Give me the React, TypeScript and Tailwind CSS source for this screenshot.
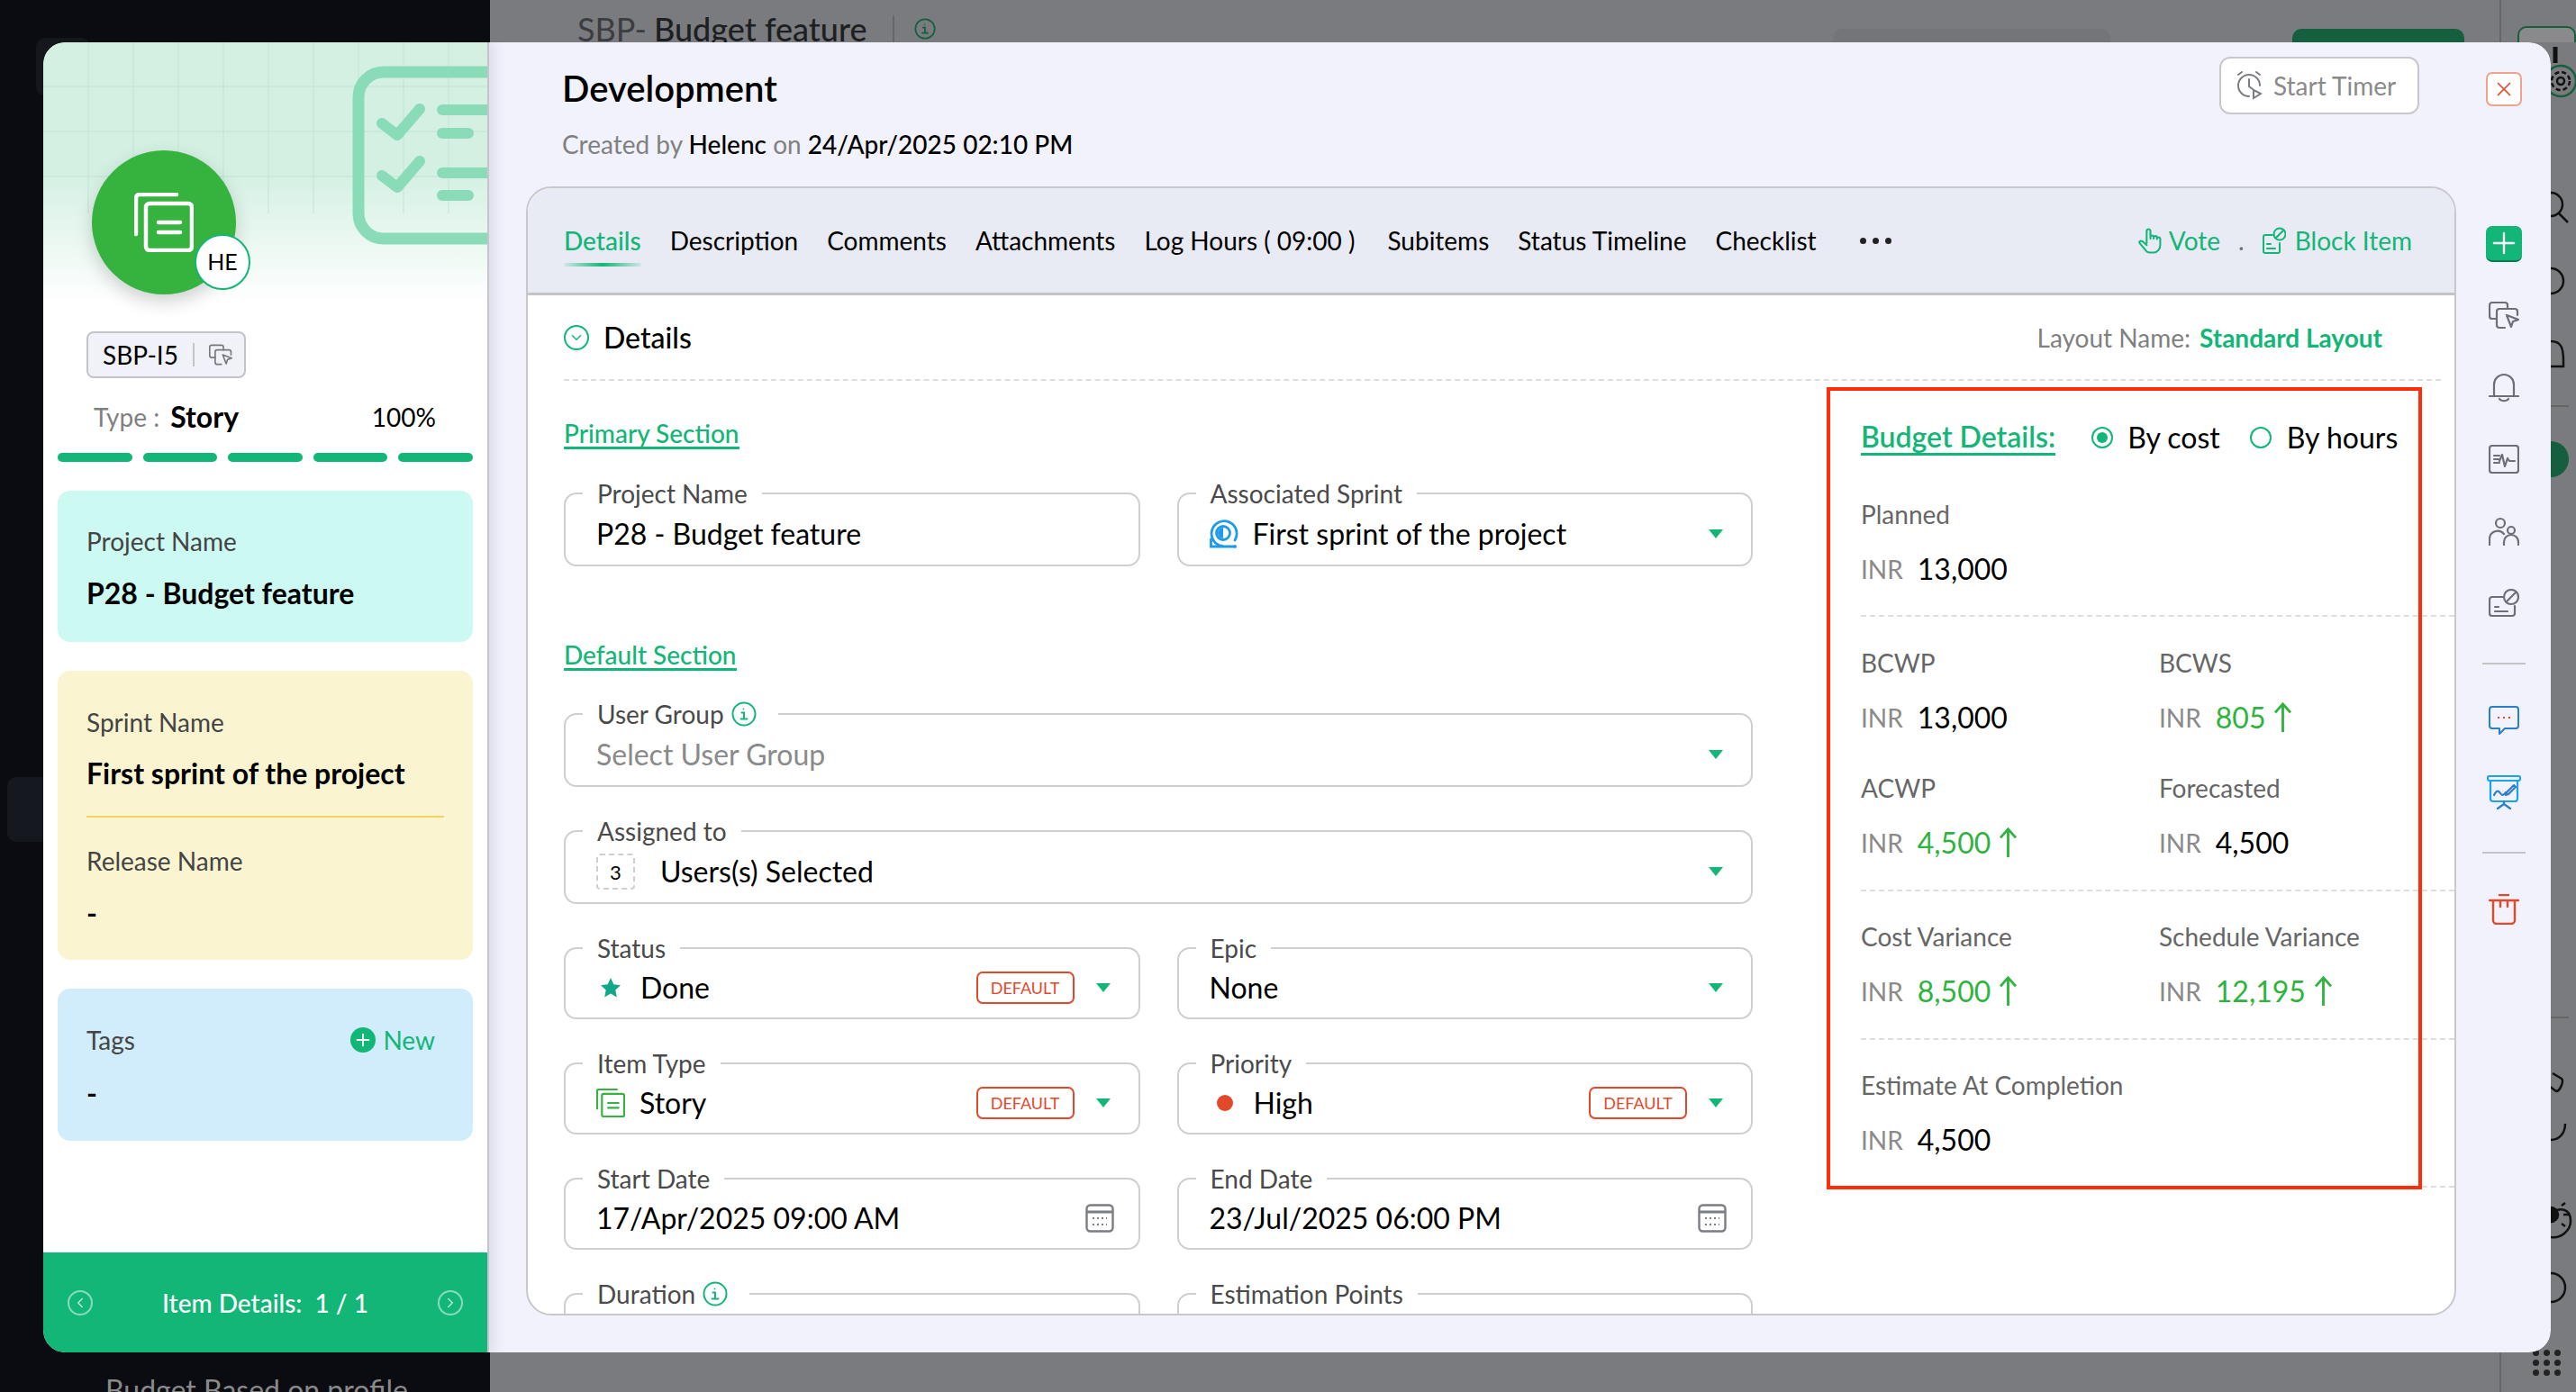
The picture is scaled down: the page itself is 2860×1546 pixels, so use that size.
import type { ReactNode } from "react";
import { ChevronDown, ChevronLeft, ChevronRight, Plus, X } from "lucide-react";

function StoryIcon({ className = "" }: { className?: string }) {
  return (
    <svg viewBox="0 0 66 66" fill="none" stroke="currentColor" strokeWidth="4.5" strokeLinecap="round" strokeLinejoin="round" className={className}>
      <path d="M2 46V6a4 4 0 0 1 4-4h41" />
      <rect x="13" y="12" width="51" height="52" rx="4" />
      <path d="M27 33h24M27 44h24" />
    </svg>
  );
}

function CopyCursor({ className = "" }: { className?: string }) {
  return (
    <svg viewBox="0 0 34 30" fill="none" stroke="currentColor" strokeWidth="2.2" strokeLinecap="round" strokeLinejoin="round" className={className}>
      <path d="M9 19H4a3 3 0 0 1-3-3V4a3 3 0 0 1 3-3h14a3 3 0 0 1 3 3v4" />
      <path d="M18 29h-6a3 3 0 0 1-3-3V11a3 3 0 0 1 3-3h17a3 3 0 0 1 3 3v4" />
      <path d="M20 15l13 5-6 2-2 6z" />
    </svg>
  );
}

function InfoCircle({ className = "" }: { className?: string }) {
  return (
    <svg viewBox="0 0 28 28" fill="none" stroke="currentColor" strokeWidth="2" strokeLinecap="round" className={className}>
      <circle cx="14" cy="14" r="12.5" />
      <circle cx="13.5" cy="8.5" r="0.9" fill="currentColor" stroke="none" />
      <path d="M11.5 12.5H14V19M10.5 19.5h7" />
    </svg>
  );
}

function Caret() {
  return <span className="h-0 w-0 shrink-0 border-x-[8px] border-t-[10px] border-x-transparent border-t-[#12b676]" />;
}

function Calendar() {
  return (
    <svg viewBox="0 0 32 32" fill="none" stroke="#7b7d85" strokeWidth="2.4" className="-mr-[4px] h-8 w-8 shrink-0">
      <rect x="1.5" y="1.5" width="29" height="29" rx="4" />
      <path d="M2 9h28" strokeWidth="3" />
      <path d="M8 16h16M8 23h16" strokeWidth="2" strokeDasharray="2 3" />
    </svg>
  );
}

function DefaultTag() {
  return (
    <span className="mr-[8px] flex h-[36px] w-[109px] shrink-0 items-center justify-center rounded-[7px] border-2 border-[#e2492a] text-[18px] text-[#e2492a]">
      DEFAULT
    </span>
  );
}

function Field({ label, info, tall, children }: { label: string; info?: boolean; tall?: boolean; children?: ReactNode }) {
  return (
    <fieldset className="min-w-0 rounded-[14px] border-2 border-[#cfcfd2]">
      <legend className={`ml-[19px] flex h-[32px] items-center gap-[8px] pl-[16px] text-[28px] leading-[32px] text-[#4a4a4a] ${info ? "pr-[24px]" : "pr-[16px]"}`}>
        {label}
        {info && <InfoCircle className="h-[28px] w-[28px] text-[#12b676]" />}
      </legend>
      <div className={`flex items-center gap-[16px] pb-[5px] pl-[34px] pr-[31px] text-[32px] text-black ${tall ? "h-[63px]" : "h-[61px]"}`}>{children}</div>
    </fieldset>
  );
}

function SectionTitle({ children }: { children: ReactNode }) {
  return (
    <div>
      <span className="inline-block border-b-[3px] border-[#12b676] text-[28px] font-medium leading-[30px] text-[#12b676]">{children}</span>
    </div>
  );
}

function Metric({ label, value, up, green }: { label: string; value: string; up?: boolean; green?: boolean }) {
  return (
    <div>
      <div className="text-[28px] leading-[34px] text-[#666]">{label}</div>
      <div className="mt-[26px] flex h-[36px] items-center text-[28px] text-[#8a8a8a]">
        INR
        <span className={`ml-[16px] text-[32px] ${green ? "text-[#2fb33f]" : "text-black"}`}>{value}</span>
        {up && (
          <svg viewBox="0 0 22 36" fill="none" stroke="#2fb33f" strokeWidth="3" className="ml-[9px] h-[34px] w-[21px]">
            <path d="M11 35V2M2 12 11 2l9 10" />
          </svg>
        )}
      </div>
    </div>
  );
}

function Dashed() {
  return <div className="-mr-[40px] border-t-2 border-dashed border-[#dedede]" />;
}

function SideIcons() {
  return (
    <div className="ml-[29px] mr-[28px] flex w-[48px] shrink-0 flex-col items-center pt-[33px] text-[#6d6f77]">
      <div className="flex h-[38px] w-[40px] items-center justify-center rounded-[7px] border-2 border-[#f0a18c] bg-white">
        <X className="h-[26px] w-[26px] text-[#e2492a]" strokeWidth={1.6} />
      </div>
      <div className="mt-[133px] flex h-[40px] w-[40px] items-center justify-center rounded-[7px] border-b-2 border-[#0c7a52] bg-[#12b676]">
        <Plus className="h-[38px] w-[38px] text-white" strokeWidth={1.5} />
      </div>
      <CopyCursor className="mt-[43px] h-[32px] w-[34px] shrink-0" />
      <svg viewBox="0 0 34 34" fill="none" stroke="currentColor" strokeWidth="2.2" strokeLinecap="round" className="mt-[47px] h-[34px] w-[34px] shrink-0">
        <path d="M6 27V14a11 11 0 0 1 22 0v13M1 27h32M12 30c2 3 8 3 10 0" />
      </svg>
      <svg viewBox="0 0 34 32" fill="none" stroke="currentColor" strokeWidth="2.2" strokeLinecap="round" strokeLinejoin="round" className="mt-[47px] h-[32px] w-[34px] shrink-0">
        <rect x="1" y="1" width="32" height="30" rx="3" />
        <path d="M6 12h6M6 16h5M6 20h6M12 18l3-7 3 13 3-9 2 3h6" />
      </svg>
      <svg viewBox="0 0 34 32" fill="none" stroke="currentColor" strokeWidth="2.2" strokeLinecap="round" className="mt-[48px] h-[32px] w-[34px] shrink-0">
        <circle cx="13" cy="7" r="5" />
        <circle cx="25" cy="15" r="4" />
        <path d="M1 31v-6a9 9 0 0 1 16-6M17 31v-3a8 8 0 0 1 16 0v3" />
      </svg>
      <svg viewBox="0 0 34 32" fill="none" stroke="currentColor" strokeWidth="2.2" strokeLinecap="round" className="mt-[48px] h-[32px] w-[34px] shrink-0">
        <path d="M16 9H4a3 3 0 0 0-3 3v15a3 3 0 0 0 3 3h22a3 3 0 0 0 3-3v-8" />
        <path d="M7 20h4M7 25h14" />
        <circle cx="25" cy="9" r="8" />
        <path d="M19.5 14.5 30.5 3.5" />
      </svg>
      <div className="mt-[50px] h-[2px] w-[48px] bg-[#c4c4c8]" />
      <svg viewBox="0 0 34 32" fill="none" stroke="#2a7fc9" strokeWidth="2" strokeLinejoin="round" className="mt-[46px] h-[32px] w-[34px] shrink-0">
        <path d="M4 1h26a3 3 0 0 1 3 3v18a3 3 0 0 1-3 3H18l-6 6v-6H4a3 3 0 0 1-3-3V4a3 3 0 0 1 3-3z" />
        <path d="M10 13h2M16 13h2M22 13h2" stroke="#e2492a" />
      </svg>
      <svg viewBox="0 0 38 38" fill="none" stroke="#19a3e8" strokeWidth="2.2" strokeLinecap="round" strokeLinejoin="round" className="mt-[45px] h-[38px] w-[38px] shrink-0">
        <rect x="1" y="1" width="36" height="5" rx="2" />
        <path d="M4 6v20a3 3 0 0 0 3 3h24a3 3 0 0 0 3-3V6" />
        <path d="M8 22c3-6 5-5 7-2s4 2 6-1" stroke="#2a7fc9" />
        <path d="M22 19l8-8 2 2-8 8-3 1z" stroke="#2a7fc9" />
        <path d="M19 29v3M12 37l7-5 7 5" stroke="#2a7fc9" />
      </svg>
      <div className="mt-[47px] h-[2px] w-[48px] bg-[#c4c4c8]" />
      <svg viewBox="0 0 34 34" fill="none" stroke="#e2492a" strokeWidth="2.4" strokeLinecap="round" className="mt-[45px] h-[34px] w-[34px] shrink-0">
        <path d="M1 7h32M12 1h10M5 7v22a4 4 0 0 0 4 4h16a4 4 0 0 0 4-4V7M13 7v7M21 7v7" />
      </svg>
    </div>
  );
}

function LeftPanel() {
  const bars = [0, 1, 2, 3, 4];
  return (
    <aside className="relative z-10 flex w-[495px] shrink-0 flex-col overflow-hidden rounded-l-[24px] border-r-2 border-[#c6c6ca] bg-white shadow-[6px_0_14px_rgba(60,60,90,0.12)]">
      <div className="absolute inset-x-0 top-0 h-[290px] bg-gradient-to-b from-[#d4f0e3] from-50% to-white" />
      <svg viewBox="0 0 494 240" fill="none" className="absolute left-0 top-0 h-[240px] w-[494px]">
        <g stroke="#bfe5d4" strokeWidth="1">
          {[50, 100, 150, 200, 250, 300, 350, 400, 450].map((x) => (
            <path key={x} d={`M${x} 0V190`} />
          ))}
          {[49, 99, 149].map((y) => (
            <path key={y} d={`M0 ${y}H494`} />
          ))}
        </g>
        <rect x="350" y="33" width="200" height="185" rx="28" stroke="#8adbb8" strokeWidth="13" />
        <g stroke="#8adbb8" strokeLinecap="round" strokeLinejoin="round" strokeWidth="12">
          <path d="M376 90l17 13 25-29M376 148l17 13 25-29" />
          <path d="M443 75h60M443 101h29M443 145h60M443 170h29" />
        </g>
      </svg>

      <div className="relative ml-[54px] mt-[120px] flex h-[160px] w-[160px] items-center justify-center rounded-full bg-[#36b23e] text-white shadow-[0_8px_20px_rgba(0,0,0,0.18)]">
        <StoryIcon className="h-[66px] w-[66px]" />
        <div className="absolute left-[114px] top-[93px] flex h-[62px] w-[62px] items-center justify-center rounded-full border-2 border-[#12b676] bg-white text-[25px] text-black">
          HE
        </div>
      </div>

      <div className="relative ml-[48px] mt-[41px] flex h-[52px] w-[177px] items-center rounded-[8px] border-2 border-[#c4c4c8] bg-[#f1f2f9] pl-[16px] text-[28px] text-black">
        SBP-I5
        <span className="ml-[16px] h-[26px] w-[2px] bg-[#c4c4c8]" />
        <CopyCursor className="ml-[16px] h-[26px] w-[26px] text-[#77797f]" />
      </div>

      <div className="relative ml-[56px] mr-[57px] mt-[23px] flex h-[40px] items-center justify-between text-[28px]">
        <div className="flex items-center">
          <span className="text-[#808080]">Type :</span>
          <span className="ml-[12px] text-[32px] font-bold text-black">Story</span>
        </div>
        <span className="text-black">100%</span>
      </div>

      <div className="relative mx-[16px] mt-[20px] flex gap-[12px]">
        {bars.map((b) => (
          <div key={b} className="h-[10px] flex-1 rounded-full bg-[#12b676]" />
        ))}
      </div>

      <div className="relative mx-[16px] mt-[32px] flex flex-col gap-[32px]">
        <div className="h-[168px] rounded-[14px] bg-[#cdf9f3] px-[32px] pt-[39px]">
          <div className="text-[28px] leading-[34px] text-[#444]">Project Name</div>
          <div className="mt-[21px] text-[32px] font-bold leading-[40px] text-black">P28 - Budget feature</div>
        </div>
        <div className="h-[321px] rounded-[14px] bg-[#fbf4d0] px-[32px] pt-[40px]">
          <div className="text-[28px] leading-[34px] text-[#444]">Sprint Name</div>
          <div className="mt-[20px] text-[32px] font-bold leading-[40px] text-black">First sprint of the project</div>
          <div className="mt-[27px] h-[2px] bg-[#f2d55c]" />
          <div className="mt-[31px] text-[28px] leading-[34px] text-[#444]">Release Name</div>
          <div className="mt-[21px] text-[32px] font-bold leading-[40px] text-black">-</div>
        </div>
        <div className="h-[169px] rounded-[14px] bg-[#d1ecfb] px-[32px] pt-[40px]">
          <div className="flex items-center justify-between text-[28px] leading-[34px]">
            <span className="text-[#444]">Tags</span>
            <span className="flex items-center gap-[8px] pr-[10px] text-[#12b676]">
              <span className="flex h-[28px] w-[28px] items-center justify-center rounded-full bg-[#12b676]">
                <Plus className="h-[22px] w-[22px] text-white" strokeWidth={2} />
              </span>
              New
            </span>
          </div>
          <div className="mt-[22px] text-[32px] font-bold leading-[40px] text-black">-</div>
        </div>
      </div>

      <div className="relative mt-auto flex h-[111px] items-center justify-between bg-[#12b676] px-[27px] text-[28px] font-medium text-white">
        <span className="flex h-[28px] w-[28px] items-center justify-center rounded-full border-2 border-white/50">
          <ChevronLeft className="h-[18px] w-[18px] text-white/70" />
        </span>
        <span>Item Details:&nbsp; 1 / 1</span>
        <span className="flex h-[28px] w-[28px] items-center justify-center rounded-full border-2 border-white/50">
          <ChevronRight className="h-[18px] w-[18px] text-white/70" />
        </span>
      </div>
    </aside>
  );
}

function MainPanel() {
  const tabs = ["Description", "Comments", "Attachments", "Log Hours ( 09:00 )", "Subitems", "Status Timeline", "Checklist"];
  return (
    <div className="flex min-w-0 flex-1 rounded-r-[24px] bg-[#f1f2fb]">
      <div className="flex min-w-0 flex-1 flex-col pl-[41px]">
        <div className="flex h-[134px] shrink-0 items-start">
          <div className="flex-1 pl-[40px] pt-[26px]">
            <div className="text-[40px] font-semibold leading-[50px] text-black">Development</div>
            <div className="mt-[19px] text-[28px] leading-[36px] text-[#808080]">
              Created by <span className="font-medium text-black">Helenc</span> on{" "}
              <span className="font-medium text-black">24/Apr/2025 02:10 PM</span>
            </div>
          </div>
          <div className="mr-[41px] mt-[16px] flex h-[64px] w-[222px] items-center gap-[12px] rounded-[12px] border-2 border-[#c8c8cc] bg-white pl-[16px] text-[28px] text-[#8a8a8a]">
            <svg viewBox="0 0 30 32" fill="none" stroke="#7b7d85" strokeWidth="2" strokeLinecap="round" className="h-[32px] w-[30px]">
              <path d="M15 28a12 12 0 1 1 12-12M15 9v8l4 3M3 4l4-3M27 4l-4-3" />
              <path d="M20 21l8 4-8 5z" />
            </svg>
            Start Timer
          </div>
        </div>

        <div className="mb-[41px] mt-[26px] flex min-h-0 flex-1 flex-col overflow-hidden rounded-[28px] border-2 border-[#c8c8cc] bg-white">
          <div className="flex h-[119px] shrink-0 items-center border-b-[3px] border-[#c4c4c8] bg-[#e8ebf4] pl-[40px] pr-[47px] text-[28px] text-black">
            <div className="relative font-medium text-[#12b676]">
              Details
              <div className="absolute inset-x-0 -bottom-[8px] h-[4px] rounded-full bg-gradient-to-r from-[#12b676]/10 via-[#12b676] to-[#12b676]/10" />
            </div>
            <div className="ml-[32px] flex gap-[32px]">
              {tabs.map((t) => (
                <span key={t} className={t.startsWith("Log") ? "pr-[4px]" : ""}>{t}</span>
              ))}
            </div>
            <span className="ml-[48px] flex gap-[7px]">
              <span className="h-[7px] w-[7px] rounded-full bg-[#222]" />
              <span className="h-[7px] w-[7px] rounded-full bg-[#222]" />
              <span className="h-[7px] w-[7px] rounded-full bg-[#222]" />
            </span>
            <div className="ml-auto flex items-center text-[#12b676]">
              <svg viewBox="0 0 26 28" fill="none" stroke="currentColor" strokeWidth="2" strokeLinecap="round" strokeLinejoin="round" className="h-[30px] w-[27px]">
                <path d="M9 17V4a2 2 0 0 1 4 0v8M13 11v-1a1.800 1.800 0 0 1 3.500 0v2M16.500 10.500a1.800 1.800 0 0 1 3.500 0v2M20 12a1.800 1.800 0 0 1 3.500 0v7c0 4-3 8-7 8h-4c-3 0-4-1-5-3L1.500 17c-1-2 1-3 3-2L9 19" />
              </svg>
              <span className="ml-[7px]">Vote</span>
              <span className="ml-[20px] text-[#6d6f77]">.</span>
              <svg viewBox="0 0 26 30" fill="none" stroke="currentColor" strokeWidth="2" strokeLinecap="round" className="ml-[20px] h-[30px] w-[26px]">
                <path d="M11 9H3a2 2 0 0 0-2 2v16a2 2 0 0 0 2 2h14a2 2 0 0 0 2-2v-9" />
                <path d="M5 19h4M5 24h9" />
                <circle cx="19" cy="8" r="6.500" />
                <path d="M14.500 12.500 23.500 3.500" />
              </svg>
              <span className="ml-[10px]">Block Item</span>
            </div>
          </div>

          <div className="min-h-0 flex-1 overflow-hidden px-[40px]">
            <div className="-mr-[25px] flex h-[95px] items-center border-b-2 border-dashed border-[#dedede] pr-[65px]">
              <span className="flex h-[28px] w-[28px] items-center justify-center rounded-full border-2 border-[#12b676]">
                <ChevronDown className="h-[18px] w-[18px] text-[#12b676]" />
              </span>
              <span className="ml-[16px] text-[32px] font-medium text-black">Details</span>
              <span className="ml-auto text-[28px] text-[#808080]">Layout Name:</span>
              <span className="ml-[10px] text-[28px] font-bold text-[#12b676]">Standard Layout</span>
            </div>

            <div className="flex">
              <div className="w-[1320px] shrink-0 pt-[43px]">
                <SectionTitle>Primary Section</SectionTitle>
                <div className="mt-[33px] grid grid-cols-2 gap-x-[41px]">
                  <Field label="Project Name" tall>P28 - Budget feature</Field>
                  <Field label="Associated Sprint" tall>
                    <svg viewBox="0 0 32 32" fill="none" stroke="#1e9be8" strokeWidth="2.8" strokeLinecap="round" className="h-[32px] w-[32px] shrink-0">
                      <path d="M14 29.500A14 14 0 1 1 28 23" />
                      <path d="M1.500 22v8H26" />
                      <circle cx="15" cy="15" r="7.500" />
                      <path d="M15 9v12a6 6 0 0 1 0-12z" fill="#1e9be8" stroke="none" />
                      <circle cx="28" cy="30" r="2" fill="#1e9be8" stroke="none" />
                    </svg>
                    <span className="flex-1">First sprint of the project</span>
                    <Caret />
                  </Field>
                </div>

                <div className="mt-[83px]"><SectionTitle>Default Section</SectionTitle></div>
                <div className="mt-[32px] flex flex-col gap-y-[33px]">
                  <Field label="User Group" info tall>
                    <span className="flex-1 text-[#8a8a8a]">Select User Group</span>
                    <Caret />
                  </Field>
                  <Field label="Assigned to" tall>
                    <span className="flex h-[40px] w-[43px] shrink-0 items-center justify-center rounded-[4px] border-2 border-dashed border-[#cfcfd2] text-[22px]">3</span>
                    <span className="flex-1 pl-[12px]">Users(s) Selected</span>
                    <Caret />
                  </Field>
                </div>
                <div className="mt-[33px] grid grid-cols-2 gap-x-[41px] gap-y-[33px]">
                  <Field label="Status">
                    <svg viewBox="0 0 24 24" className="ml-[4px] h-[24px] w-[24px] shrink-0 fill-[#11a88a]">
                      <path d="M12 1l3.300 7.300 7.700.9-5.700 5.300 1.500 8L12 18.600 5.200 22.500l1.500-8L1 9.200l7.700-.9z" />
                    </svg>
                    <span className="flex-1 pl-[5px]">Done</span>
                    <DefaultTag />
                    <Caret />
                  </Field>
                  <Field label="Epic">
                    <span className="flex-1">None</span>
                    <Caret />
                  </Field>
                  <Field label="Item Type">
                    <StoryIcon className="h-[32px] w-[32px] shrink-0 text-[#36b23e]" />
                    <span className="flex-1">Story</span>
                    <DefaultTag />
                    <Caret />
                  </Field>
                  <Field label="Priority">
                    <span className="ml-[8px] mr-[7px] h-[18px] w-[18px] shrink-0 rounded-full bg-[#e2492a]" />
                    <span className="flex-1">High</span>
                    <DefaultTag />
                    <Caret />
                  </Field>
                  <Field label="Start Date">
                    <span className="flex-1">17/Apr/2025 09:00 AM</span>
                    <Calendar />
                  </Field>
                  <Field label="End Date">
                    <span className="flex-1">23/Jul/2025 06:00 PM</span>
                    <Calendar />
                  </Field>
                  <Field label="Duration" info />
                  <Field label="Estimation Points" />
                </div>
              </div>

              <div className="relative ml-[120px] min-w-0 flex-1 pt-[39px]">
                <div className="pointer-events-none absolute -left-[38px] top-[7px] z-10 h-[891px] w-[661px] border-[4px] border-[#ff2d0a]" />
                <div className="flex items-center text-[32px]">
                  <span className="border-b-[3px] border-[#12b676] font-semibold leading-[36px] text-[#12b676]">Budget Details:</span>
                  <span className="ml-[40px] flex h-[24px] w-[24px] items-center justify-center rounded-full border-2 border-[#12b676]">
                    <span className="h-[12px] w-[12px] rounded-full bg-[#12b676]" />
                  </span>
                  <span className="ml-[16px] text-black">By cost</span>
                  <span className="ml-[33px] h-[24px] w-[24px] rounded-full border-2 border-[#12b676]" />
                  <span className="ml-[17px] text-black">By hours</span>
                </div>
                <div className="mt-[44px] pb-[33px]">
                  <Metric label="Planned" value="13,000" />
                </div>
                <Dashed />
                <div className="grid grid-cols-[331px_1fr] gap-y-[43px] pb-[34px] pt-[34px]">
                  <Metric label="BCWP" value="13,000" />
                  <Metric label="BCWS" value="805" up green />
                  <Metric label="ACWP" value="4,500" up green />
                  <Metric label="Forecasted" value="4,500" />
                </div>
                <Dashed />
                <div className="grid grid-cols-[331px_1fr] pb-[34px] pt-[33px]">
                  <Metric label="Cost Variance" value="8,500" up green />
                  <Metric label="Schedule Variance" value="12,195" up green />
                </div>
                <Dashed />
                <div className="pb-[33px] pt-[33px]">
                  <Metric label="Estimate At Completion" value="4,500" />
                </div>
                <Dashed />
              </div>
            </div>
          </div>
        </div>
      </div>
      <SideIcons />
    </div>
  );
}

function Backdrop() {
  return (
    <div className="flex h-full w-full">
      <div className="flex w-[544px] shrink-0 flex-col bg-[#0a0c12]">
        <div className="ml-[40px] mt-[42px] h-[64px] w-[60px] rounded-[10px] bg-[#14181c]" />
        <div className="ml-[8px] mt-[757px] h-[72px] w-[48px] rounded-l-[10px] bg-[#15181e]" />
        <div className="mt-auto h-[18px] overflow-hidden whitespace-nowrap pl-[117px] text-[32px] leading-[32px] text-[#8a8a8a]">Budget Based on profile</div>
      </div>
      <div className="flex min-w-0 flex-1 bg-[#7a7b7f]">
        <div className="flex h-[47px] min-w-0 flex-1 items-start overflow-hidden">
          <div className="ml-[97px] flex shrink-0 items-center whitespace-nowrap pt-[10px]">
            <span className="text-[36px] leading-[44px] text-[#3c3d40]">SBP-</span>
            <span className="ml-[8px] text-[36px] font-medium leading-[44px] text-[#1e1f21]">Budget feature</span>
            <span className="ml-[28px] h-[30px] w-[2px] bg-[#66676a]" />
            <InfoCircle className="ml-[22px] h-[24px] w-[24px] text-[#155f3f]" />
          </div>
          <div className="ml-auto mt-[32px] h-[40px] w-[308px] shrink-0 rounded-[10px] bg-[#747579]" />
          <div className="ml-[202px] mr-[39px] mt-[32px] h-[40px] w-[191px] shrink-0 rounded-t-[10px] bg-[#155f3f]" />
        </div>
        <div className="flex w-[85px] shrink-0 flex-col border-l-2 border-[#66676a] text-[#111]">
          <div className="ml-[18px] mt-[29px] h-[18px] shrink-0 rounded-t-[10px] border-x-2 border-t-2 border-[#155f3f] bg-[#8a8a8c]" />
          <div className="relative ml-auto w-[28px] flex-1">
            <svg viewBox="0 0 28 1499" fill="none" stroke="currentColor" strokeWidth="2.5" className="h-full w-full">
              <path d="M5 5V23" strokeWidth="5" />
              <circle cx="11" cy="43" r="17" stroke="#155f3f" />
              <circle cx="11" cy="43" r="4" />
              <circle cx="11" cy="43" r="10" strokeDasharray="5 3" />
              <circle cx="0" cy="180" r="13" />
              <path d="M9 190l10 10" />
              <circle cx="0" cy="265" r="14" />
              <path d="M0 332c12 0 14 8 14 22v6H0M0 1219c10 0 16-8 16-18M0 1301c10-8 22-6 22 8 0 10-10 20-22 18" />
              <path d="M0 404H20" stroke="#666" strokeWidth="2" />
              <circle cx="0" cy="463" r="20" fill="#155f3f" stroke="none" />
              <path d="M0 1083H20" stroke="#666" strokeWidth="2" />
              <path d="M2 1145l10 6c3 3-2 14-6 14l-8-6" />
              <circle cx="0" cy="1302" r="8" fill="currentColor" />
              <path d="M14 1302h6M12 1292l4-3M12 1312l4 3" />
              <circle cx="0" cy="1383" r="16" />
            </svg>
            <div className="absolute -left-[20px] top-[1452px] grid grid-cols-3 gap-x-[5px] gap-y-[4px]">
              {[0, 1, 2, 3, 4, 5, 6, 7, 8].map((d) => (
                <span key={d} className="h-[7px] w-[7px] rounded-full bg-[#222]" />
              ))}
            </div>
          </div>
        </div>
      </div>
    </div>
  );
}

export default function App() {
  return (
    <div className="relative h-[1546px] w-[2860px] overflow-hidden font-[Lato,sans-serif]">
      <Backdrop />
      <div className="absolute left-[48px] top-[47px] flex h-[1455px] w-[2784px] overflow-hidden rounded-[24px]">
        <LeftPanel />
        <MainPanel />
      </div>
    </div>
  );
}
